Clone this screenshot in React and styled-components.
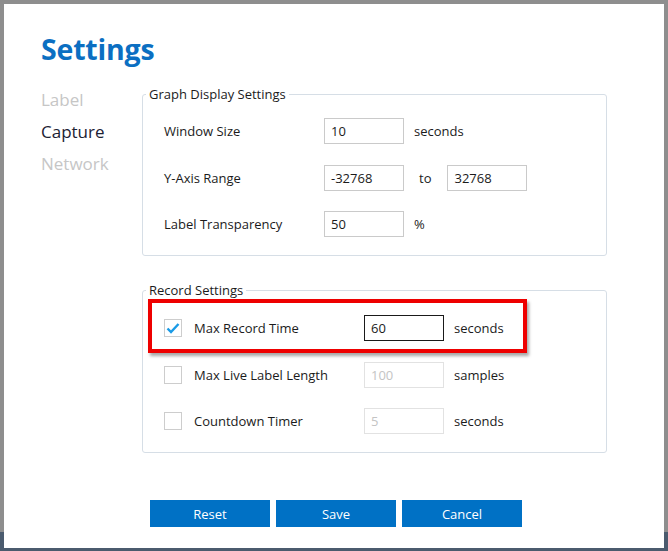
import React from 'react';
import styled, { createGlobalStyle } from 'styled-components';

const GlobalStyle = createGlobalStyle`
  html, body {
    margin: 0;
    padding: 0;
  }
  body {
    font-family: "Open Sans", "Noto Sans", sans-serif;
    color: #1b1b1b;
  }
`;

// desktop behind the dialog: grey frame, slate strip at the bottom
const Desktop = styled.div`
  width: 668px;
  height: 551px;
  background: linear-gradient(to bottom, #8e8e8e 0, #8e8e8e 532px, #4b5b6e 532px);
  padding: 4px 4px 3px 4px;
  box-sizing: border-box;
  overflow: hidden;
`;

const Window = styled.div`
  width: 660px;
  height: 544px;
  background: #fff;
  box-sizing: border-box;
  padding: 25px 0 0 37px;
  display: flex;
  flex-direction: column;
`;

const Title = styled.h1`
  margin: 0;
  font-family: "Open Sans", sans-serif;
  font-weight: 700;
  font-size: 28.5px;
  line-height: 40px;
  color: #0b6fc2;
  letter-spacing: -0.2px;
`;

const Body = styled.div`
  display: flex;
  margin-top: 16px;
`;

const Nav = styled.nav`
  width: 101px;
  display: flex;
  flex-direction: column;
  margin-top: -1px;
`;

const NavItem = styled.div`
  font-size: 17px;
  line-height: 32px;
  color: ${(p) => (p.$active ? '#1c2233' : '#c6c6c6')};
`;

const Main = styled.div`
  width: 465px;
  display: flex;
  flex-direction: column;
`;

const Group = styled.fieldset`
  position: relative;
  margin: 0 0 ${(p) => p.$gap || 0}px 0;
  border: 1px solid #d6dee6;
  border-radius: 3px;
  padding: ${(p) => p.$pad};
  min-width: 0;
`;

const Legend = styled.legend`
  font-size: 13px;
  line-height: 18px;
  padding: 0 3px;
  margin-left: 3px;
  color: #1b1b1b;
`;

const Rows = styled.div`
  display: grid;
  grid-template-columns: ${(p) => p.$cols};
  grid-auto-rows: 26px;
  row-gap: 20.5px;
  align-items: center;
  margin-left: 21px;
`;

const Label = styled.span`
  font-size: 13px;
  color: #1b1b1b;
  white-space: nowrap;
`;

const Unit = styled.span`
  font-size: 13px;
  color: #1b1b1b;
  padding-left: ${(p) => p.$pad || 10}px;
  white-space: nowrap;
`;

const Inline = styled.div`
  display: flex;
  align-items: center;
`;

const Field = styled.div`
  width: 80px;
  height: 26px;
  box-sizing: border-box;
  border: 1px solid ${(p) => (p.$focus ? '#1a1a1a' : p.$disabled ? '#e2e2e2' : '#cacaca')};
  padding: 0 6px;
  font-size: 13px;
  line-height: 24px;
  color: ${(p) => (p.$disabled ? '#c4c4c4' : '#1b1b1b')};
  background: #fff;
`;

const Box = styled.span`
  width: 18px;
  height: 18px;
  box-sizing: border-box;
  border: 1px solid #cdcdcd;
  display: flex;
  align-items: center;
  justify-content: center;
  background: #fff;
`;

const Highlight = styled.div`
  position: absolute;
  left: 5px;
  top: 0;
  width: 379px;
  height: 54px;
  box-sizing: border-box;
  border: 4px solid #ee0000;
  box-shadow: 2px 3px 3px rgba(0, 0, 0, 0.35);
  pointer-events: none;
`;

const Buttons = styled.div`
  display: flex;
  gap: 6px;
  margin: 47px 0 0 8px;
`;

const Button = styled.button`
  width: 120px;
  height: 27px;
  border: none;
  background: #0071c5;
  color: #fff;
  font-family: "Open Sans", sans-serif;
  font-size: 13px;
  padding: 0;
`;

const Check = () => (
  <svg width="14" height="12" viewBox="0 0 14 12">
    <path d="M1.5 6.5 L5 10 L12.5 2" fill="none" stroke="#1a9be6" strokeWidth="2.4" />
  </svg>
);

const record = [
  { label: 'Max Record Time', value: '60', unit: 'seconds', on: true },
  { label: 'Max Live Label Length', value: '100', unit: 'samples' },
  { label: 'Countdown Timer', value: '5', unit: 'seconds' },
];

export default function App() {
  return (
    <Desktop>
      <GlobalStyle />
      <Window>
        <Title>Settings</Title>
        <Body>
          <Nav>
            <NavItem>Label</NavItem>
            <NavItem $active>Capture</NavItem>
            <NavItem>Network</NavItem>
          </Nav>
          <Main>
            <Group $pad="15px 20px 18px 0" $gap={25}>
              <Legend>Graph Display Settings</Legend>
              <Rows $cols="160px 80px 1fr">
                <Label>Window Size</Label>
                <Field>10</Field>
                <Unit>seconds</Unit>

                <Label>Y-Axis Range</Label>
                <Field>-32768</Field>
                <Inline>
                  <Unit $pad={15}>to</Unit>
                  <Unit $pad={16}></Unit>
                  <Field>32768</Field>
                </Inline>

                <Label>Label Transparency</Label>
                <Field>50</Field>
                <Unit>%</Unit>
              </Rows>
            </Group>

            <Group $pad="16px 20px 18px 0">
              <Legend>Record Settings</Legend>
              <Highlight />
              <Rows $cols="30px 170px 80px 1fr">
                {record.map((r) => (
                  <React.Fragment key={r.label}>
                    <Box>{r.on && <Check />}</Box>
                    <Label>{r.label}</Label>
                    <Field $focus={r.on} $disabled={!r.on}>{r.value}</Field>
                    <Unit>{r.unit}</Unit>
                  </React.Fragment>
                ))}
              </Rows>
            </Group>

            <Buttons>
              <Button>Reset</Button>
              <Button>Save</Button>
              <Button>Cancel</Button>
            </Buttons>
          </Main>
        </Body>
      </Window>
    </Desktop>
  );
}
